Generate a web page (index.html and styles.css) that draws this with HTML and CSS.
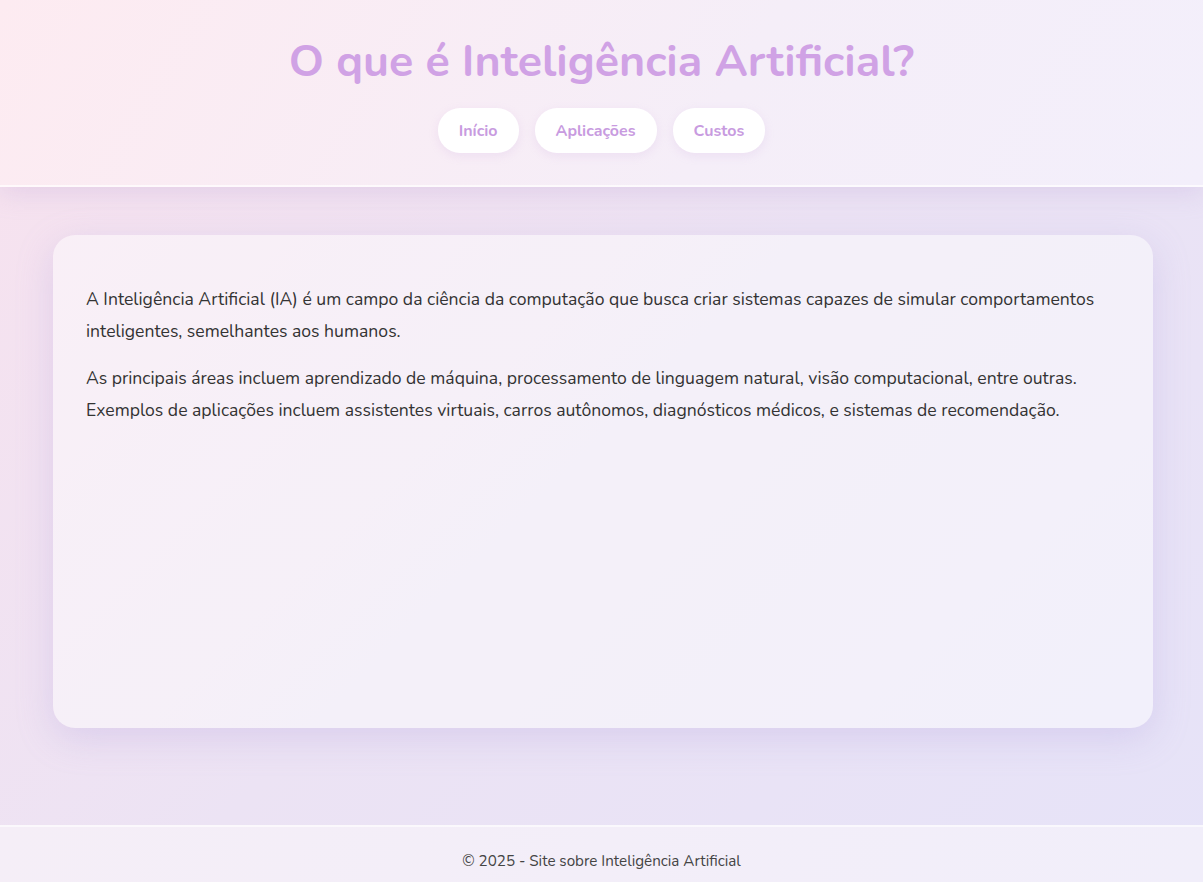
FILE: index.html
```html
<!DOCTYPE html>
<html lang="pt-BR">
<head>
<meta charset="UTF-8">
<title>O que é Inteligência Artificial?</title>
<link rel="stylesheet" href="styles.css">
</head>
<body>
<header class="site-header">
  <h1 class="title">O que é Inteligência Artificial?</h1>
  <nav class="nav">
    <a class="nav-btn" href="#">Início</a>
    <a class="nav-btn" href="#">Aplicações</a>
    <a class="nav-btn" href="#">Custos</a>
  </nav>
</header>
<main class="main">
  <section class="card">
    <p>A Inteligência Artificial (IA) é um campo da ciência da computação que busca criar sistemas capazes de simular comportamentos inteligentes, semelhantes aos humanos.</p>
    <p>As principais áreas incluem aprendizado de máquina, processamento de linguagem natural, visão computacional, entre outras. Exemplos de aplicações incluem assistentes virtuais, carros autônomos, diagnósticos médicos, e sistemas de recomendação.</p>
  </section>
</main>
<footer class="site-footer">© 2025 - Site sobre Inteligência Artificial</footer>
</body>
</html>
```
FILE: styles.css
```css
* { box-sizing: border-box; }
html, body { margin: 0; padding: 0; }
body {
  min-height: 100vh;
  display: flex;
  flex-direction: column;
  font-family: Nunito, "Open Sans", "Noto Sans", sans-serif;
  color: #333;
  background: linear-gradient(135deg, #f8e2ee 0%, #ece3f4 50%, #e6e3f8 100%);
}
.site-header {
  background: linear-gradient(120deg, #fdebf1 0%, #f5eef8 60%, #f3effb 100%);
  border-bottom: 2px solid rgba(255,255,255,0.7);
  box-shadow: 0 6px 24px rgba(180, 150, 210, 0.25);
  padding: 32px 16px 32px;
  text-align: center;
  position: relative;
  z-index: 1;
}
.title {
  margin: 0;
  font-size: 44.8px;
  line-height: 60px;
  font-weight: 700;
  color: #d0a2e5;
}
.nav {
  margin-top: 16px;
  display: flex;
  justify-content: center;
  gap: 16px;
}
.nav-btn {
  display: inline-flex;
  align-items: center;
  height: 45px;
  padding: 0 21px;
  background: #fff;
  border-radius: 22px;
  color: #c89be0;
  font-weight: 700;
  font-size: 16px;
  text-decoration: none;
  box-shadow: 0 3px 10px rgba(200, 160, 220, 0.18);
}
.main {
  flex: 1;
  padding: 48px 50px 96px 53px;
}
.card {
  max-width: 1100px;
  min-height: 493px;
  margin: 0 auto;
  background: rgba(255, 255, 255, 0.45);
  border-radius: 22px;
  padding: 33px 33px 32px;
  box-shadow: 0 10px 36px rgba(170, 150, 220, 0.28);
}
.card p {
  margin: 16px 0;
  font-size: 17.6px;
  line-height: 31.68px;
  color: #333;
}
.site-footer {
  background: linear-gradient(120deg, #f5eef7 0%, #f1eefa 100%);
  border-top: 2px solid rgba(255,255,255,0.6);
  text-align: center;
  font-size: 15.2px;
  color: #444;
  padding: 24px 0 0;
  line-height: 21px;
  height: 57px;
}
```
